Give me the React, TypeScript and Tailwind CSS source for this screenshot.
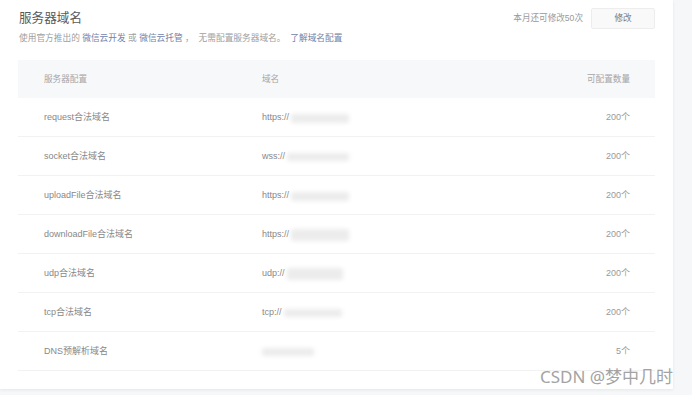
import React from "react";

const rows: { name: string; prefix: string; blurW: number; blurH: number; count: string }[] = [
  { name: "request合法域名", prefix: "https://", blurW: 58, blurH: 9, count: "200个" },
  { name: "socket合法域名", prefix: "wss://", blurW: 62, blurH: 8, count: "200个" },
  { name: "uploadFile合法域名", prefix: "https://", blurW: 58, blurH: 9, count: "200个" },
  { name: "downloadFile合法域名", prefix: "https://", blurW: 58, blurH: 12, count: "200个" },
  { name: "udp合法域名", prefix: "udp://", blurW: 56, blurH: 12, count: "200个" },
  { name: "tcp合法域名", prefix: "tcp://", blurW: 58, blurH: 8, count: "200个" },
  { name: "DNS预解析域名", prefix: "", blurW: 52, blurH: 8, count: "5个" },
];

export default function App() {
  return (
    <div
      className="relative w-[692px] h-[395px] bg-[#f6f7f9] overflow-hidden"
      style={{ fontFamily: '"Liberation Sans", "Noto Sans CJK SC", sans-serif' }}
    >
      <div className="w-[673px] h-[389px] bg-white shadow-[0_1px_3px_rgba(0,0,0,0.07)] px-[18px] pt-[8px]">
        <div className="flex justify-between">
          <div className="pl-px">
            <div className="text-[12.6px] leading-[20px] text-[#5a5a5a]">服务器域名</div>
            <div className="mt-[3px] text-[8.7px] leading-[14px] text-[#a0a0a0] whitespace-nowrap">
              使用官方推出的 <span className="text-[#6f82aa]">微信云开发</span> 或{" "}
              <span className="text-[#6f82aa]">微信云托管</span> ，&nbsp; 无需配置服务器域名。&nbsp;{" "}
              <span className="text-[#6f82aa]">了解域名配置</span>
            </div>
          </div>
          <div className="flex items-start gap-[8px]">
            <div className="h-[21px] leading-[21px] text-[8.6px] text-[#999]">本月还可修改50次</div>
            <div className="w-[64px] h-[21px] rounded-[2px] border border-[#ededed] bg-[#f9f9f9] flex items-center justify-center text-[8.6px] text-[#777]">
              修改
            </div>
          </div>
        </div>

        <div className="mt-[15px]">
          <div className="flex items-center h-[38px] bg-[#f7f8fa] text-[8.6px] text-[#a6a6a6]">
            <div className="w-[244px] pl-[26px]">服务器配置</div>
            <div className="flex-1">域名</div>
            <div className="pr-[25px]">可配置数量</div>
          </div>
          {rows.map((r) => (
            <div key={r.name} className="flex items-center h-[39px] pt-[2px] border-b border-[#f2f2f2] text-[9px] text-[#888]">
              <div className="w-[244px] pl-[26px] whitespace-nowrap">{r.name}</div>
              <div className="flex-1 flex items-center">
                {r.prefix && <span>{r.prefix}</span>}
                <div
                  className="bg-[#ececec] blur-[2px] rounded-[2px]"
                  style={{ width: r.blurW, height: r.blurH, marginLeft: r.prefix ? 2 : 0 }}
                />
              </div>
              <div className="pr-[25px] text-[#999]">{r.count}</div>
            </div>
          ))}
        </div>
      </div>

      <div
        className="absolute left-[540px] top-[366px] text-[17px] leading-[22px] text-[#a3a3a3] whitespace-nowrap"
        style={{ fontFamily: '"Noto Sans", "Noto Sans CJK SC", sans-serif' }}
      >
        CSDN @梦中几时
      </div>
    </div>
  );
}
